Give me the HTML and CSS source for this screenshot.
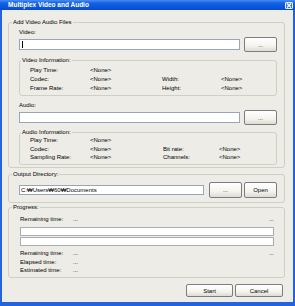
FILE: index.html
```html
<!DOCTYPE html>
<html>
<head>
<meta charset="utf-8">
<link rel="stylesheet" href="styles.css">
</head>
<body>
<div class="window">
  <div class="titlebar">
    <span class="title">Multiplex Video and Audio</span>
    <span class="close"><svg width="6" height="5" viewBox="0 0 6 5"><path d="M1 0.5L5 4.5M5 0.5L1 4.5" stroke="#fff" stroke-width="1.2"/></svg></span>
  </div>
  <div class="body">
    <fieldset class="group g-files">
      <legend>Add Video Audio Files</legend>
      <div class="inner files-inner">
        <div class="lbl">Video:</div>
        <div class="filerow">
          <div class="input"><span class="caret"></span></div>
          <button class="btn browse">...</button>
        </div>
        <fieldset class="sub sub-video">
          <legend>Video Information:</legend>
          <div class="info info-video">
            <span>Play Time:</span><span>&lt;None&gt;</span><span></span><span></span>
            <span>Codec:</span><span>&lt;None&gt;</span><span>Width:</span><span>&lt;None&gt;</span>
            <span>Frame Rate:</span><span>&lt;None&gt;</span><span>Height:</span><span>&lt;None&gt;</span>
          </div>
        </fieldset>
        <div class="lbl lbl-audio">Audio:</div>
        <div class="filerow">
          <div class="input"></div>
          <button class="btn browse">...</button>
        </div>
        <fieldset class="sub sub-audio">
          <legend>Audio Information:</legend>
          <div class="info info-audio">
            <span>Play Time:</span><span>&lt;None&gt;</span><span></span><span></span>
            <span>Codec:</span><span>&lt;None&gt;</span><span>Bit rate:</span><span>&lt;None&gt;</span>
            <span>Sampling Rate:</span><span>&lt;None&gt;</span><span>Channels:</span><span>&lt;None&gt;</span>
          </div>
        </fieldset>
      </div>
    </fieldset>

    <fieldset class="group g-output">
      <legend>Output Directory:</legend>
      <div class="inner output-inner">
        <div class="filerow outrow">
          <div class="input outinput">C:₩Users₩60₩Documents</div>
          <button class="btn browse2">...</button>
          <button class="btn open">Open</button>
        </div>
      </div>
    </fieldset>

    <fieldset class="group g-progress">
      <legend>Progress:</legend>
      <div class="inner progress-inner">
        <div class="prow"><span class="pl">Remaining time:</span><span class="pv">...</span><span class="pr">...</span></div>
        <div class="bar"></div>
        <div class="bar bar2"></div>
        <div class="times">
          <div class="prow"><span class="pl">Remaining time:</span><span class="pv">...</span><span class="pr">...</span></div>
          <div class="prow"><span class="pl">Elapsed time:</span><span class="pv">...</span></div>
          <div class="prow"><span class="pl">Estimated time:</span><span class="pv">...</span></div>
        </div>
      </div>
    </fieldset>

    <div class="actions">
      <button class="btn start">Start</button>
      <button class="btn cancel">Cancel</button>
    </div>
  </div>
</div>
</body>
</html>
```

FILE: styles.css
```css
* { box-sizing: border-box; }
html, body { margin: 0; padding: 0; }
body {
  width: 295px;
  height: 306px;
  font-family: "Liberation Sans", Arial, sans-serif;
  font-size: 6px;
  color: #000;
  background: #fff;
  overflow: hidden;
}
.window {
  width: 295px;
  height: 306px;
  display: flex;
  flex-direction: column;
  background: #2463DE;
}
.titlebar {
  height: 10px;
  flex: none;
  display: flex;
  align-items: center;
  padding: 0 2px 0 8px;
  background: linear-gradient(#4A8CF2, #1463E4 30%, #0A58E0 65%, #0A4ACB);
}
.title {
  flex: 1;
  color: #fff;
  font-weight: bold;
  font-size: 6.5px;
  line-height: 10px;
}
.close {
  width: 8px;
  height: 7px;
  border: 1px solid #E8F0FF;
  border-radius: 1px;
  background: linear-gradient(#4C86EE, #2560DC);
  display: flex;
  align-items: center;
  justify-content: center;
}
.close svg { display: block; }
.body {
  flex: 1;
  margin: 0 2px 4px 2px;
  background: #EDECE6;
  display: flex;
  flex-direction: column;
  padding: 8px 8px 0 6px;
}
fieldset {
  margin: 0;
  padding: 0;
  min-width: 0;
  border: 1px solid #D0CFC4;
  border-radius: 3px;
}
legend {
  padding: 0 1px;
  line-height: 8px;
}
.group > legend { margin-left: 3px; }
.sub > legend { margin-left: 1px; }
.inner { display: flex; flex-direction: column; }
.files-inner { padding: 2px 7px 2px 10px; }
.lbl { line-height: 8px; }
.lbl-audio { margin-top: 5px; }
.filerow {
  display: flex;
  align-items: center;
  gap: 4px;
  margin-top: 1px;
  height: 15px;
}
.input {
  flex: 1;
  height: 11px;
  border: 1px solid #9AA6B4;
  background: #fff;
  line-height: 9px;
  padding-left: 1px;
}
.caret {
  display: block;
  width: 1px;
  height: 7px;
  margin-top: 1px;
  margin-left: 1px;
  background: #000;
}
.btn {
  font-family: inherit;
  font-size: 6px;
  color: #000;
  margin: 0;
  padding: 0;
  border: 1px solid #7B7D80;
  border-radius: 2px;
  background: linear-gradient(#FFFFFF, #F4F3EE 60%, #DEDCD2);
  line-height: 1;
}
.browse { width: 33px; height: 15px; }
.sub { margin-top: 4px; }
.sub-audio { margin-top: 3px; }
.info {
  display: grid;
  grid-template-columns: 60px 72px 59px auto;
  padding: 2px 0 2px 10px;
  line-height: 9px;
}
.info-audio {
  grid-template-columns: 60px 73px 56px auto;
  padding: 0 0 2.5px 10px;
  line-height: 8.5px;
}
.g-output { margin-top: 2px; }
.output-inner { padding: 4px 7px 4px 10px; }
.outrow { height: 16px; gap: 0; margin-top: 0; }
.outinput { height: 10px; line-height: 8px; padding-left: 1px; }
.browse2 { width: 33px; height: 16px; margin-left: 5px; }
.open { width: 33px; height: 16px; margin-left: 2px; }
.g-progress { margin-top: 0; }
.progress-inner { padding: 4px 10px 2.5px 11px; }
.prow { display: flex; line-height: 8px; }
.pl { width: 53px; }
.pv { flex: 1; }
.bar {
  height: 9px;
  margin-top: 4px;
  border: 1px solid #A9AEB5;
  background: #fff;
}
.bar2 { margin-top: 1px; }
.times { margin-top: 3px; }
.times .prow { line-height: 8.5px; }
.actions {
  display: flex;
  justify-content: flex-end;
  gap: 2px;
  margin-top: 6px;
  padding-right: 2px;
}
.start { width: 47px; height: 13px; }
.cancel { width: 48px; height: 13px; }
```
